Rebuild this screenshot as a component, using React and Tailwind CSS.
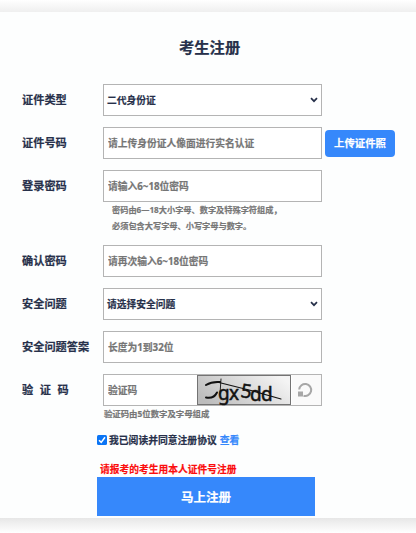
const box = "box-border h-8 w-[219px] shrink-0 rounded-none border border-[#b4b4b4] bg-white pl-1 text-[9.75px] font-bold outline-none";

function Row({ label, children, className = "" }) {
  return (
    <div className={`flex h-8 items-center ${className}`}>
      <div className="w-[81px] shrink-0 whitespace-pre text-[11.2px] font-bold text-[#27304a]">{label}</div>
      {children}
    </div>
  );
}

function Field({ placeholder }) {
  return <input className={`${box} placeholder:text-[#757575] placeholder:opacity-100`} placeholder={placeholder} />;
}

function Choice({ text }) {
  return (
    <button className={`${box} flex items-center justify-between pl-[3px] pr-[3px] text-left text-[#27304a]`}>
      <span className="pt-px">{text}</span>
      <svg width="8" height="6" viewBox="0 0 8 6" fill="none" stroke="#27304a" strokeWidth="1.7">
        <path d="M1 1.2 4 4.2 7 1.2" />
      </svg>
    </button>
  );
}

function Captcha() {
  return (
    <svg className="h-[30px] w-[95px] shrink-0 overflow-visible" viewBox="0 0 95 30">
      <defs>
        <linearGradient id="captchaBg" x1="0" y1="0.7" x2="1" y2="0.3">
          <stop offset="0" stopColor="#bcbcbc" />
          <stop offset="1" stopColor="#f4f4f4" />
        </linearGradient>
      </defs>
      <rect x="0.5" y="0.5" width="93" height="29" fill="url(#captchaBg)" stroke="#737373" />
      <text
        x="21 32 43 53 64"
        y="25 25 22 25.5 25.5"
        rotate="0 0 8 0 0"
        fill="#111"
        stroke="#111"
        strokeWidth="0.5"
        fontFamily="'Noto Sans', sans-serif"
        fontSize="19"
        fontWeight="400"
        className="[-webkit-text-stroke:0px]"
      >
        gx5dd
      </text>
      <g fill="none" stroke="#111" strokeLinecap="round">
        <path d="M9 10C13 7.5 17 6.5 23 7" strokeWidth="2" />
        <path d="M20 7 54 15.5 84 24" strokeWidth="1.1" />
        <path d="M9 22.5C14 23.5 18 21.5 20 17.5" strokeWidth="2" />
        <path d="M24 4 23 19" strokeWidth="0.9" />
      </g>
    </svg>
  );
}

export default function App() {
  return (
    <div className="flex h-[533px] w-[416px] flex-col overflow-hidden bg-white font-['Open_Sans','Noto_Sans_CJK_SC',sans-serif] leading-none [-webkit-text-stroke:0.2px_currentColor]">
      <div className="h-3 shrink-0 bg-linear-to-b from-white to-[#efefef]" />
      <main className="h-[506px] shrink-0 bg-[#fdfefe] pl-[22px]">
        <h1 className="ml-[157px] pt-[27px] text-[15.3px] font-bold leading-4 text-[#27304a]">考生注册</h1>
        <Row label="证件类型" className="mt-[29px]"><Choice text="二代身份证" /></Row>
        <Row label="证件号码" className="mt-[11px]">
          <Field placeholder="请上传身份证人像面进行实名认证" />
          <button className="ml-[3px] h-[27px] w-[70px] rounded bg-[#3688fb] text-[10.4px] font-bold text-white">上传证件照</button>
        </Row>
        <Row label="登录密码" className="mt-[11px]"><Field placeholder="请输入6~18位密码" /></Row>
        <div className="ml-[90px] h-[43px] whitespace-nowrap text-[8.2px] font-bold leading-4 text-[#777]">
          <p>密码由6—18大小字母、数字及特殊字符组成，</p>
          <p>必须包含大写字母、小写字母与数字。</p>
        </div>
        <Row label="确认密码"><Field placeholder="请再次输入6~18位密码" /></Row>
        <Row label="安全问题" className="mt-[11px]"><Choice text="请选择安全问题" /></Row>
        <Row label="安全问题答案" className="mt-[11px]"><Field placeholder="长度为1到32位" /></Row>
        <Row label={<span className="flex gap-[6.5px]"><span>验</span><span>证</span><span>码</span></span>} className="mt-[11px]">
          <div className={`${box} flex items-center`}>
            <input className="w-[89px] shrink-0 bg-transparent font-bold outline-none placeholder:text-[#757575] placeholder:opacity-100" placeholder="验证码" />
            <Captcha />
            <div className="flex h-full flex-1 items-center justify-center bg-[#fafafa] pr-1">
              <svg width="16" height="16" viewBox="0 0 16 16" fill="none" stroke="#a7a7a7" strokeWidth="2">
                <path d="M2.2 7.5A6 6 0 1 1 6.5 13.8" />
                <path d="M1 9.5H6V14.5H1Z" fill="#a7a7a7" stroke="none" />
              </svg>
            </div>
          </div>
        </Row>
        <p className="ml-[82px] mt-[2px] text-[8.4px] font-bold leading-3 text-[#777]">验证码由5位数字及字母组成</p>
        <div className="ml-[75px] mt-[12px] flex h-4 items-center text-[9.8px] font-bold text-[#27304a]">
          <span className="mr-[2px] flex size-[10px] items-center justify-center rounded-[1.5px] bg-[#0b75f5]">
            <svg width="10" height="10" viewBox="0 0 10 10" fill="none" stroke="white" strokeWidth="1.5"><path d="M2 5.3 4.2 7.4 8 2.3" /></svg>
          </span>
          <span className="pt-px">我已阅读并同意注册协议</span>
          <a className="ml-[3px] pt-px text-[#3688fb]">查看</a>
        </div>
        <p className="ml-[78px] mt-[13px] h-4 text-[9.75px] font-bold leading-[18px] text-[#fb0d0d]">请报考的考生用本人证件号注册</p>
        <button className="ml-[75px] block h-[39px] w-[218px] bg-[#3688fb] pt-[4px] text-[12.5px] font-bold text-white">马上注册</button>
      </main>
      <div className="flex-1 bg-linear-to-b from-[#e7e7e7] to-white" />
    </div>
  );
}
